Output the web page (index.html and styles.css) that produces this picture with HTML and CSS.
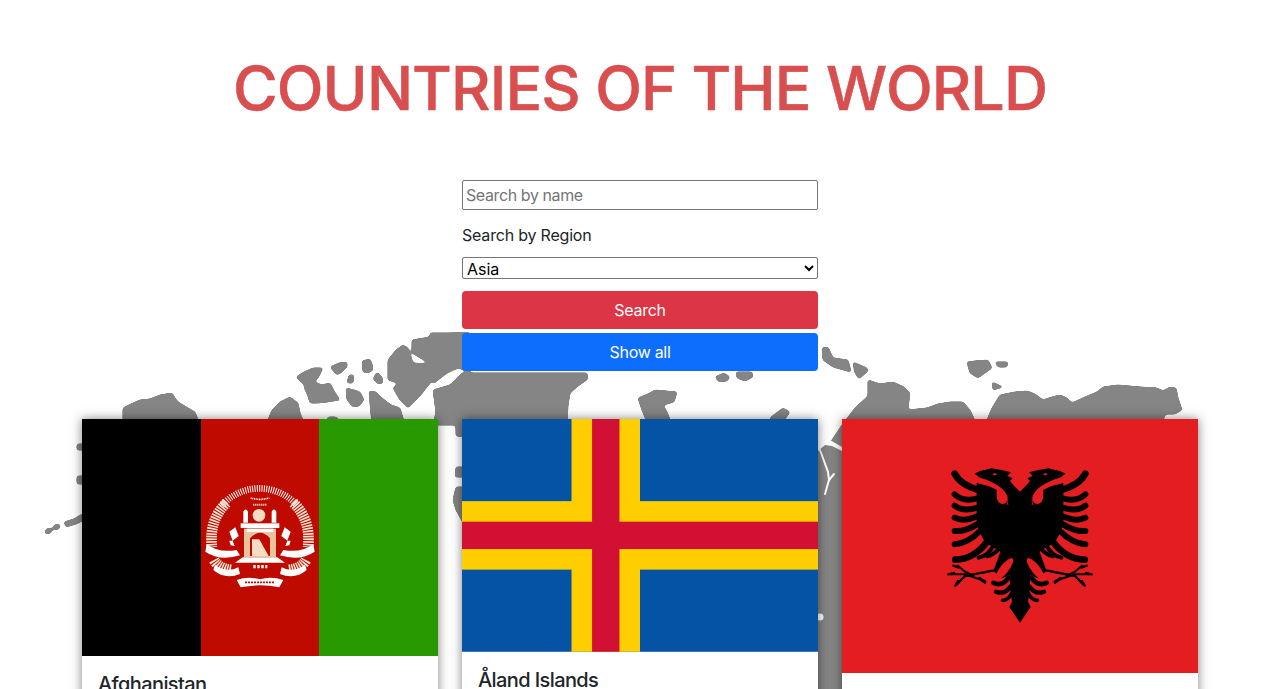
FILE: index.html
```html
<!DOCTYPE html>
<html lang="en">
<head>
<meta charset="UTF-8">
<meta name="viewport" content="width=device-width, initial-scale=1.0">
<title>Countries of the World</title>
<link rel="stylesheet" href="styles.css">
</head>
<body>
<div class="page">
<!-- world map behind the cards -->
<svg class="world-map" width="1280" height="689" viewBox="0 0 1280 689">
<defs>
<filter id="coast" filterUnits="userSpaceOnUse" x="0" y="0" width="1280" height="689">
<feGaussianBlur stdDeviation="1.5"/>
<feComponentTransfer><feFuncA type="linear" slope="7" intercept="-2.8"/></feComponentTransfer>
</filter>
</defs>
<g class="land" filter="url(#coast)">
<polygon points="123,425 123,408 131,404 140,400 150,399 160,395 172,393 175,398 178,402 188,408 195,412 200,425"/>
<polygon points="266,425 272,410 280,402 290,397 298,403 300,413 305,425"/>
<polygon points="325,425 328,417 336,417 345,425"/>
<polygon points="296,377 304,372 313,368 323,368 318,378 313,383 305,386"/>
<polygon points="304,387 314,382 322,385 330,383 334,391 340,400 333,401 327,402 318,403 310,403 308,396"/>
<polygon points="330,367 339,363 347,362 347,367 342,372 337,375"/>
<polygon points="349,375 354,375 353,383 347,383"/>
<polygon points="362,361 370,359 372,364 373,370 368,373 363,372"/>
<polygon points="377,372 382,377 383,383 378,384 373,379"/>
<polygon points="346,388 354,390 360,392 364,400 359,406 353,407 347,400"/>
<polygon points="369,391 376,392 382,398 391,405 400,408 405,425 372,425 370,403"/>
<polygon points="388,360 396,350 403,345 408,348 413,363 405,372 398,383 388,380"/>
<polygon points="412,340 430,337 453,333 470,333 470,360 445,362 427,362 412,353"/>
<polygon points="414,363 427,364 447,367 434,376 430,383 420,396 408,408 400,400 393,388 402,380"/>
<polygon points="433,390 450,385 462,373 587,373 588,379 578,386 570,393 568,405 567,425 433,425 436,412"/>
<polygon points="430,333 470,333 470,372 458,368 447,373 433,384"/>
<polygon points="638,398 648,394 655,390 677,392 674,402 663,405 667,412 672,425 648,425 642,410"/>
<polygon points="715,377 724,373 730,377 727,381 719,382"/>
<polygon points="736,372 752,372 753,377 745,381 737,378"/>
<polygon points="768,425 771,417 783,408 790,412 785,419 780,425"/>
<polygon points="822,348 828,347 833,358 848,360 851,372 833,367 823,360"/>
<polygon points="853,362 867,368 868,371 859,379 855,373"/>
<polygon points="842,425 855,408 868,396 868,380 880,384 893,382 904,387 910,393 908,408 905,425"/>
<polygon points="905,425 908,410 927,408 938,404 950,402 963,402 970,410 977,425"/>
<polygon points="967,362 975,361 988,360 992,368 985,373 978,378 970,373"/>
<polygon points="995,362 1008,362 1007,367 998,367"/>
<polygon points="992,382 1003,387 993,390"/>
<polygon points="985,425 992,408 1000,395 1015,392 1027,391 1035,394 1043,400 1052,397 1060,395 1067,398 1072,403 1085,397 1097,392 1103,387 1118,385 1140,387 1157,388 1163,391 1170,387 1176,388 1178,398 1182,410 1175,414 1165,414 1162,425"/>
<polygon points="456,419 466,419 466,437 456,436"/>
<polygon points="456,467 466,467 466,477 455,477"/>
<polygon points="456,487 466,487 466,528 456,510 453,500"/>
<polygon points="77,444 86,444 86,450 77,450"/>
<polygon points="77,476 86,476 86,484 77,484"/>
<polygon points="64,522 74,519 82,514 88,518 76,524 66,527"/>
<polygon points="54,525 60,524 59,529 53,530"/>
<polygon points="46,529 52,528 51,533 45,534"/>
<polygon points="830,443 842,425 852,425 852,700 812,700 812,448"/>
</g>
<g class="water">
<polygon points="818,444 826,432 830,440 842,447 842,451 832,446 825,445 818,451"/>
<path class="river" d="M820 450 L828 472 L829 480 L825 494"/>
<path class="river" d="M829 480 L834 474"/>
<circle cx="820" cy="617" r="3.5"/>
</g>
</svg>

<h1 class="title">COUNTRIES OF THE WORLD</h1>

<form class="search-form">
<input class="search-input" type="text" placeholder="Search by name">
<label class="region-label" for="region">Search by Region</label>
<select class="region-select" id="region">
<option>Asia</option>
<option>Africa</option>
<option>Americas</option>
<option>Europe</option>
<option>Oceania</option>
</select>
<button class="btn btn-search" type="button">Search</button>
<button class="btn btn-all" type="button">Show all</button>
</form>

<div class="cards">
<div class="card">
<svg class="flag" viewBox="0 0 356 237">
<rect width="356" height="237" fill="#bf0a00"/>
<rect width="119" height="237" fill="#000"/>
<rect x="237" width="119" height="237" fill="#299900"/>
<g transform="translate(108 51) scale(.3333)">
<g fill="none" stroke="#fff">
<path d="M96 106 A150 150 0 0 1 321 106" stroke-width="20" stroke-dasharray="3 4"/>
<path d="M182 84 Q210 92 238 84" stroke-width="5" stroke-dasharray="3 2"/>
<path d="M190 104 H230" stroke-width="6" stroke-dasharray="3 3"/>
</g>
<g fill="none" stroke="#fae8d6" stroke-width="32" stroke-dasharray="5 3">
<path d="M110 98 Q56 150 66 232"/>
<path d="M310 98 Q364 150 354 232"/>
<path d="M72 270 Q85 295 125 300"/>
<path d="M348 270 Q335 295 295 300"/>
</g>
<g fill="#fff">
<path d="M50 222 Q85 250 140 240 L150 256 Q90 275 46 245 Z"/>
<path d="M370 222 Q335 250 280 240 L270 256 Q330 275 374 245 Z"/>
<path d="M75 285 Q110 310 145 292 L150 312 Q105 330 70 300 Z"/>
<path d="M345 285 Q310 310 275 292 L270 312 Q315 330 350 300 Z"/>
<path d="M140 330 Q175 318 210 328 Q245 318 280 330 L268 352 Q210 340 152 352 Z"/>
<path d="M160 125 Q167 112 174 125 V158 H160 Z"/>
<path d="M245 125 Q252 112 259 125 V158 H245 Z"/>
<rect x="152" y="160" width="116" height="14"/>
<polygon points="135,278 158,262 262,262 285,278"/>
<polygon points="118,185 136,172 146,198 128,212"/>
<polygon points="302,185 284,172 274,198 292,212"/>
<polygon points="118,212 128,212 134,228 122,226"/>
<polygon points="302,212 292,212 286,228 298,226"/>
</g>
<circle cx="207" cy="136" r="19" fill="#f5dcc2"/>
<rect x="162" y="176" width="96" height="86" fill="#e9c39b"/>
<rect x="170" y="176" width="80" height="10" fill="#fff"/>
<path d="M180 258 V205 Q210 172 240 205 V258 Z" fill="#bf0a00"/>
<polygon points="186,258 186,208 208,208 236,258" fill="#f5dcc2"/>
<path d="M190 290 H232" stroke="#fff" stroke-width="10" stroke-dasharray="7 5" fill="none"/>
<path d="M165 337 H255" stroke="#bf0a00" stroke-width="5" stroke-dasharray="6 3" fill="none"/>
</g>
</svg>
<div class="card-body"><h5 class="card-title">Afghanistan</h5></div>
</div>

<div class="card">
<svg class="flag" viewBox="0 0 26 17">
<rect width="26" height="17" fill="#0553a4"/>
<rect x="8" width="5" height="17" fill="#ffce00"/>
<rect y="6" width="26" height="5" fill="#ffce00"/>
<rect x="9.5" width="2" height="17" fill="#d21034"/>
<rect y="7.5" width="26" height="2" fill="#d21034"/>
</svg>
<div class="card-body"><h5 class="card-title">Åland Islands</h5></div>
</div>

<div class="card">
<svg class="flag" viewBox="0 0 356 254">
<rect width="356" height="254" fill="#e41e20"/>
<g transform="translate(88 36) scale(.3333)">
<g id="eagle-half">
<path d="M134 56 L150 48 L185 40 L215 45 L243 52 L232 62 L248 70 L240 78 L252 92 L270 110 V150 H235 L232 122 Q222 100 195 86 L170 74 L150 68 Z"/>
<path d="M140 84 Q172 90 200 104 V125 Q203 147 218 147 Q232 147 232 130 V150 H270 V300 L240 300 L212 290 L165 262 L145 225 L140 205 Z"/>
<g class="feather">
<path d="M74 56 Q92 90 144 104" stroke-width="20"/>
<path d="M74 118 Q100 142 142 130" stroke-width="18"/>
<path d="M74 152 Q100 172 142 158" stroke-width="18"/>
<path d="M74 188 Q100 202 142 184" stroke-width="18"/>
<path d="M74 228 Q108 230 144 206" stroke-width="18"/>
<path d="M74 268 Q115 264 150 228" stroke-width="18"/>
<path d="M76 314 Q130 314 170 262" stroke-width="20"/>
<path d="M146 308 Q176 302 192 268" stroke-width="12"/>
<path d="M172 304 Q196 298 214 274" stroke-width="12"/>
</g>
<path d="M212 288 L270 296 V503 L238 456 L246 440 L240 400 L240 360 L218 370 L190 348 Z"/>
<ellipse cx="223" cy="342" rx="13" ry="40" fill="#e41e20" transform="rotate(38 223 342)"/>
<g class="feather">
<path d="M190 384 Q216 396 236 368" stroke-width="14"/>
<path d="M198 410 Q224 420 240 396" stroke-width="13"/>
<path d="M218 436 Q236 434 244 416" stroke-width="11"/>
<path d="M192 346 L105 363 L80 388" stroke-width="7"/>
<path d="M62 358 H105 L165 378" stroke-width="6"/>
<path d="M84 332 L105 350 L130 362" stroke-width="6"/>
<path d="M148 370 L165 382" stroke-width="9"/>
<path d="M70 332 L86 338" stroke-width="7"/>
<path d="M55 358 L72 354" stroke-width="7"/>
<path d="M76 392 L84 378" stroke-width="7"/>
</g>
</g>
<use href="#eagle-half" transform="translate(540 0) scale(-1 1)"/>
<g fill="#e41e20">
<ellipse cx="194" cy="58" rx="6" ry="3"/>
<ellipse cx="346" cy="58" rx="6" ry="3"/>
<path d="M140 56 L165 62 L152 60 Z"/>
<path d="M400 56 L375 62 L388 60 Z"/>
</g>
</g>
</svg>
<div class="card-body"><h5 class="card-title">Albania</h5></div>
</div>
</div>
</div>
</body>
</html>
```

FILE: styles.css
```css
* {box-sizing: border-box;}
html {background: #fff;}
body {margin: 0;padding: 0;font-family: "Inter", "Liberation Sans", sans-serif;font-size: 16px;line-height: 1.5;color: #212529;}
.page {position: relative;height: 100vh;overflow: hidden;}
.world-map {position: absolute;left: 0;top: 0;z-index: -1;}
.land polygon {fill: #858585;stroke: #858585;stroke-width: 1;stroke-linejoin: round;}
.water {fill: #fff;}
.river {fill: none;stroke: #fff;stroke-width: 2;stroke-linecap: round;}

.title {margin: 0;padding-top: 52px;font-size: 61px;font-weight: 500;line-height: 72px;letter-spacing: -0.9px;text-align: center;color: #d94e4e;-webkit-text-stroke: 0.5px #d94e4e;}

.search-form {display: flex;flex-direction: column;width: 356px;margin: 56px auto 0;}
.search-input {height: 30px;padding: 1px 3px;font: inherit;letter-spacing: -0.4px;color: #000;background: #fff;border: 1px solid #767676;border-radius: 2px;}
.search-input::placeholder {color: #757575;}
.region-label {margin-top: 13px;line-height: 24px;letter-spacing: -0.2px;}
.region-select {height: 22px;margin-top: 10px;padding: 0 0 2px;font: inherit;font-size: 16px;line-height: 20px;color: #000;background: #fff;border: 1px solid #767676;border-radius: 2px;}
.btn {height: 38px;padding: 6px 12px;font: inherit;letter-spacing: -0.3px;color: #fff;border: 0;border-radius: 4px;cursor: pointer;}
.btn-search {margin-top: 12px;background: #dc3545;}
.btn-all {margin-top: 4px;background: #0d6efd;}

.cards {display: grid;grid-template-columns: repeat(3, 356px);gap: 24px;justify-content: center;align-items: start;margin-top: 48px;}
.card {background: #fff;box-shadow: 0 0 10px rgba(0, 0, 0, 0.5);}
.flag {display: block;width: 100%;height: auto;}
.feather path {fill: none;stroke: #000;stroke-linecap: round;}
.card-body {min-height: 200px;padding: 16px;}
.card-title {margin: 0;font-size: 20px;font-weight: 500;line-height: 24px;letter-spacing: -0.6px;color: #212529;}
```
